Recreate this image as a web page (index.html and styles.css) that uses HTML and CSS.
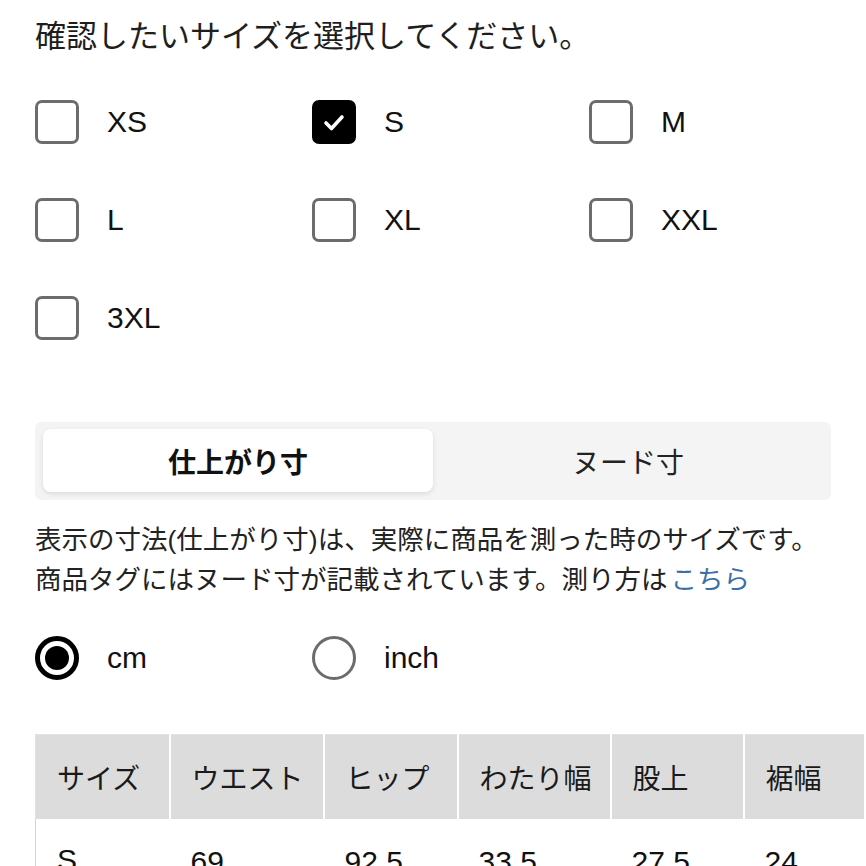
FILE: index.html
```html
<!DOCTYPE html>
<html lang="ja">
<head>
<meta charset="utf-8">
<link rel="stylesheet" href="styles.css">
</head>
<body>
<div class="page">
  <h1 class="title">確認したいサイズを選択してください。</h1>

  <div class="sizes">
    <label class="opt"><span class="box"></span><span class="lbl">XS</span></label>
    <label class="opt"><span class="box checked"><svg viewBox="0 0 44 44" width="44" height="44"><path d="M14 23 L19.5 28.5 L30 17" fill="none" stroke="#fff" stroke-width="3.6" stroke-linecap="round" stroke-linejoin="round"/></svg></span><span class="lbl">S</span></label>
    <label class="opt"><span class="box"></span><span class="lbl">M</span></label>
    <label class="opt"><span class="box"></span><span class="lbl">L</span></label>
    <label class="opt"><span class="box"></span><span class="lbl">XL</span></label>
    <label class="opt"><span class="box"></span><span class="lbl">XXL</span></label>
    <label class="opt"><span class="box"></span><span class="lbl">3XL</span></label>
  </div>

  <div class="tabs">
    <div class="tab active">仕上がり寸</div>
    <div class="tab">ヌード寸</div>
  </div>

  <p class="note">表示の寸法(仕上がり寸)は、実際に商品を測った時のサイズです。<br>商品タグにはヌード寸が記載されています。測り方は<a class="link">こちら</a></p>

  <div class="units">
    <label class="opt"><span class="radio on"></span><span class="lbl">cm</span></label>
    <label class="opt"><span class="radio"></span><span class="lbl">inch</span></label>
  </div>

  <table class="chart">
    <colgroup>
      <col class="c1"><col class="c2"><col class="c3"><col class="c4"><col class="c5"><col class="c6">
    </colgroup>
    <thead>
      <tr><th>サイズ</th><th>ウエスト</th><th>ヒップ</th><th>わたり幅</th><th>股上</th><th>裾幅</th></tr>
    </thead>
    <tbody>
      <tr><td class="sz">S</td><td>69</td><td>92.5</td><td>33.5</td><td>27.5</td><td>24</td></tr>
    </tbody>
  </table>
</div>
</body>
</html>
```

FILE: styles.css
```css
html, body {
  margin: 0;
  padding: 0;
  background: #fff;
}
body {
  font-family: "Liberation Sans", "Noto Sans CJK JP", sans-serif;
  color: #1a1a1a;
  overflow: hidden;
}
.page {
  padding: 12px 0 0 35px;
}
.title {
  margin: 0;
  font-family: "Noto Sans CJK JP", sans-serif;
  font-size: 31px;
  font-weight: 400;
  line-height: 44px;
  color: #1e1e1e;
}
.sizes {
  display: grid;
  grid-template-columns: 277px 277px 277px;
  row-gap: 54px;
  margin-top: 44px;
}
.opt {
  display: flex;
  align-items: center;
  gap: 28px;
  height: 44px;
}
.box {
  box-sizing: border-box;
  width: 44px;
  height: 44px;
  border: 3.5px solid #6c6c6c;
  border-radius: 7px;
  flex: none;
  display: flex;
}
.box.checked {
  background: #000;
  border-color: #000;
}
.box.checked svg {
  margin: -3.5px;
}
.lbl {
  font-size: 30px;
  line-height: 44px;
  color: #111;
}
.tabs {
  margin-top: 82px;
  width: 796px;
  box-sizing: border-box;
  height: 78px;
  padding: 7px 8px 8px;
  background: #f4f4f4;
  border-radius: 6px;
  display: grid;
  grid-template-columns: 1fr 1fr;
}
.tab {
  display: flex;
  align-items: center;
  justify-content: center;
  font-family: "Noto Sans CJK JP", sans-serif;
  font-size: 28px;
  color: #222;
  border-radius: 8px;
}
.tab.active {
  background: #fff;
  font-weight: 700;
  color: #111;
  box-shadow: 0 2px 5px rgba(0,0,0,0.10);
}
.note {
  margin: 20px 0 0;
  font-size: 26.5px;
  line-height: 40px;
  color: #222;
}
.link {
  color: #3a6fa8;
  margin-left: 3px;
}
.units {
  display: grid;
  grid-template-columns: 277px 277px;
  margin-top: 36px;
}
.radio {
  box-sizing: border-box;
  width: 44px;
  height: 44px;
  border-radius: 50%;
  border: 3.5px solid #6c6c6c;
  flex: none;
  position: relative;
}
.radio.on {
  border: 5px solid #000;
}
.radio.on::after {
  content: "";
  position: absolute;
  left: 5px;
  top: 5px;
  width: 24px;
  height: 24px;
  border-radius: 50%;
  background: #000;
}
.chart {
  margin-top: 54px;
  border-collapse: collapse;
  table-layout: fixed;
  width: 828px;
  border-top: 1px solid #e2e2e2;
}
.c1 { width: 134px; }
.c2 { width: 154px; }
.c3 { width: 134px; }
.c4 { width: 153px; }
.c5 { width: 133px; }
.c6 { width: 120px; }
.chart th {
  background: #dcdcdc;
  height: 84px;
  padding: 0 0 0 21px;
  text-align: left;
  font-family: "Noto Sans CJK JP", sans-serif;
  font-size: 28px;
  font-weight: 400;
  color: #1a1a1a;
  border-left: 2px solid #fff;
  box-sizing: border-box;
}
.chart th:first-child {
  border-left: 1px solid #e2e2e2;
}
.chart td {
  height: 84px;
  padding: 0 0 0 21px;
  font-size: 30px;
  color: #111;
  border-left: 1px solid #d4d4d4;
  border-bottom: 1px solid #d4d4d4;
  box-sizing: border-box;
}
.chart td + td {
  border-left: none;
  padding-top: 4px;
}
```
